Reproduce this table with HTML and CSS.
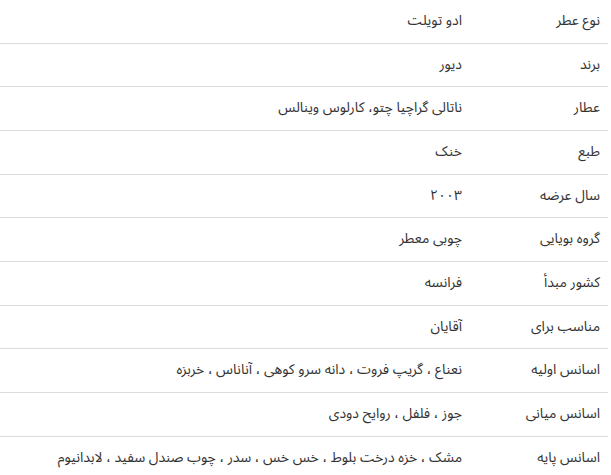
FILE: index.html
```html
<!DOCTYPE html>
<html lang="fa">
<head>
<meta charset="utf-8">
<title>مشخصات عطر</title>
<link rel="stylesheet" href="styles.css">
</head>
<body>
<table class="specs" dir="rtl">
<tbody>
<tr><th>نوع عطر</th><td>ادو تویلت</td></tr>
<tr><th>برند</th><td>دیور</td></tr>
<tr><th>عطار</th><td>ناتالی گراچیا چتو، کارلوس وینالس</td></tr>
<tr><th>طبع</th><td>خنک</td></tr>
<tr><th>سال عرضه</th><td>۲۰۰۳</td></tr>
<tr><th>گروه بویایی</th><td>چوبی معطر</td></tr>
<tr><th>کشور مبدأ</th><td>فرانسه</td></tr>
<tr><th>مناسب برای</th><td>آقایان</td></tr>
<tr><th>اسانس اولیه</th><td>نعناع ، گریپ فروت ، دانه سرو کوهی ، آناناس ، خربزه</td></tr>
<tr><th>اسانس میانی</th><td>جوز ، فلفل ، روایح دودی</td></tr>
<tr><th>اسانس پایه</th><td>مشک ، خزه درخت بلوط ، خس خس ، سدر ، چوب صندل سفید ، لابدانیوم</td></tr>
</tbody>
</table>
</body>
</html>
```
FILE: styles.css
```css
html, body {
  margin: 0;
  padding: 0;
  background: #fff;
}
body {
  font-family: "Noto Sans Arabic", "Noto Sans", "DejaVu Sans", sans-serif;
  font-size: 14px;
  color: #333;
}
.specs {
  width: 608px;
  margin: 0 auto 0 0;
  border-collapse: collapse;
  table-layout: fixed;
}
.specs th,
.specs td {
  padding: 10px 8px;
  line-height: 22.67px;
  text-align: right;
  font-weight: normal;
  border-bottom: 1px solid #dcdcdc;
  vertical-align: middle;
  white-space: nowrap;
}
.specs th {
  width: 122px;
}
```
